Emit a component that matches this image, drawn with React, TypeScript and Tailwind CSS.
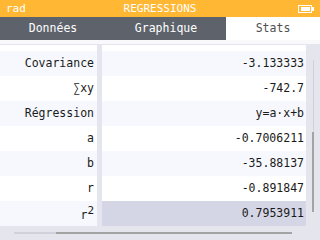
const rows: { label: React.ReactNode; value: string }[] = [
  { label: "Covariance", value: "-3.133333" },
  { label: "∑xy", value: "-742.7" },
  { label: "Régression", value: "y=a·x+b" },
  { label: "a", value: "-0.7006211" },
  { label: "b", value: "-35.88137" },
  { label: "r", value: "-0.891847" },
  {
    label: (
      <span className="flex items-start">
        <span className="mt-[4px]">r</span>
        <span className="text-[11px] -mt-[1px]">2</span>
      </span>
    ),
    value: "0.7953911",
  },
];

const Battery = () => (
  <svg width="16" height="8" viewBox="0 0 16 8" className="block">
    <rect x="0.5" y="0.5" width="13" height="7" fill="none" stroke="white" />
    <rect x="3" y="2" width="9" height="4" fill="white" />
    <rect x="14" y="2" width="2" height="4" fill="white" />
  </svg>
);

export default function App() {
  return (
    <div
      className="w-[320px] h-[240px] flex flex-col overflow-hidden bg-[#e5e6ed] text-[11.5px] leading-none"
      style={{ fontFamily: '"DejaVu Sans Mono", monospace' }}
    >
      {/* status bar */}
      <div className="h-[17px] bg-[#ffb734] text-white flex items-center px-[6px] text-[11px]">
        <span className="w-[60px]">rad</span>
        <span className="flex-1 text-center">REGRESSIONS</span>
        <span className="w-[60px] flex justify-end">
          <Battery />
        </span>
      </div>

      {/* tabs */}
      <div className="h-[23px] bg-[#5e636b] flex text-white">
        <div className="w-[106px] flex items-center justify-center">Données</div>
        <div className="w-[120px] flex items-center justify-center">Graphique</div>
        <div className="flex-1 bg-white text-[#505050] flex items-center justify-center">
          Stats
        </div>
      </div>

      <div className="h-[4px] bg-[#f9f9fb]" />
      <div className="h-[1px] bg-[#e4e5ec]" />

      {/* table */}
      <div className="flex h-[181px]">
        <div className="w-[306px] grid grid-cols-[97px_5px_1fr] auto-rows-min text-[#1a1a1a]">
          <div className="h-[6px] bg-white" />
          <div className="h-[6px] bg-[#e4e5ee]" />
          <div className="h-[6px] bg-white" />
          {rows.map((r, i) => {
            const light = i % 2 === 0;
            const last = i === rows.length - 1;
            return (
              <div key={i} className="contents">
                <div
                  className={`h-[25px] flex items-center justify-end pr-[3px] ${
                    light ? "bg-[#f6f8fd]" : "bg-white"
                  }`}
                >
                  {r.label}
                </div>
                <div className="h-[25px] bg-[#e4e5ee]" />
                <div
                  className={`h-[25px] flex items-center justify-end pr-[2px] ${
                    last ? "bg-[#d5d6e5]" : light ? "bg-[#f6f8fd]" : "bg-white"
                  }`}
                >
                  {r.value}
                </div>
              </div>
            );
          })}
        </div>
        {/* vertical scrollbar */}
        <div className="flex-1 flex justify-center pt-[15px]">
          <div className="w-[2px] flex flex-col">
            <div className="h-[72px] w-[1px] mx-auto bg-[#d0d1da]" />
            <div className="h-[80px] bg-[#a3a3a3]" />
          </div>
        </div>
      </div>

      {/* horizontal scrollbar */}
      <div className="flex-1 flex items-center pl-[14px] pb-[1px]">
        <div className="w-[42px] h-[2px] bg-[#d0d1da]" />
        <div className="w-[236px] h-[2px] bg-[#a3a3a3]" />
      </div>
    </div>
  );
}
